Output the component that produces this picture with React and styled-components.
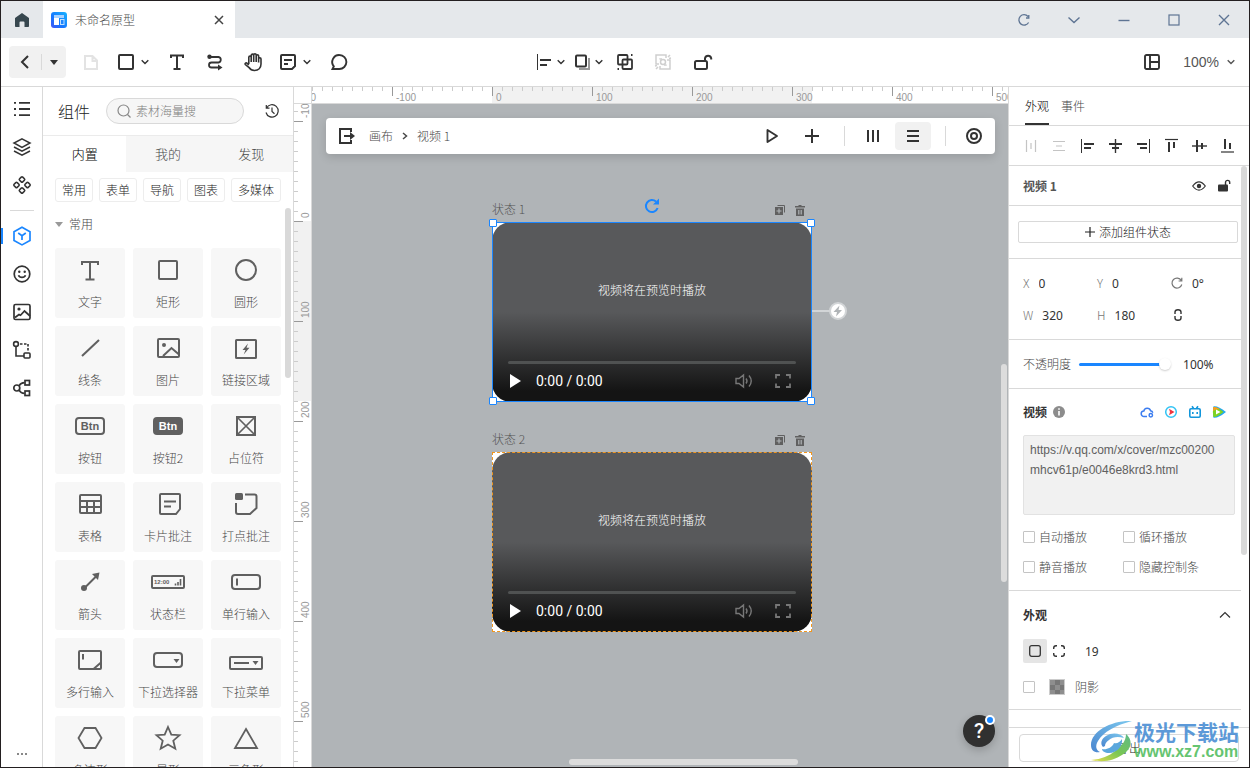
import React from 'react'
import styled, { createGlobalStyle, css } from 'styled-components'

const GlobalStyle = createGlobalStyle`
  *, *::before, *::after {
    box-sizing: border-box;
  }
  body {
    margin: 0;
    font-family: "Noto Sans CJK SC", "Noto Sans", sans-serif;
    font-size: 12px;
    font-weight: 300;
    line-height: 20px;
    color: #484848;
  }
  button, input, textarea {
    font: inherit;
    color: inherit;
    margin: 0;
  }
`

const ink = '#333'
const textDark = '#222'
const textGrey = '#484848'
const line = '#d9d9d9'
const blue = '#1a86ff'

/* ---------- shared ---------- */

const FlexRow = styled.div`
  display: flex;
  align-items: center;
`

const PlainButton = styled.button`
  display: flex;
  align-items: center;
  justify-content: center;
  padding: 0;
  border: 0;
  background: none;
  color: ${props => props.$color || ink};
  cursor: pointer;
`

const Svg = styled.svg`
  display: block;
  flex: none;
  overflow: visible;
  fill: none;
  stroke: currentColor;
  stroke-width: ${props => props.$stroke || 2};
`

const Icon = ({ size = 16, height, stroke, children }) => (
  <Svg width={size} height={height || size} viewBox={`0 0 ${size} ${height || size}`} $stroke={stroke} aria-hidden="true">
    {children}
  </Svg>
)

const Solid = props => <g fill="currentColor" stroke="none" {...props} />

const Chevron = () => (
  <Icon size={8} stroke={1.4}><path d="M.7 2.2 4 5.6l3.3-3.4" /></Icon>
)

/* ---------- frame ---------- */

const Window = styled.div`
  display: flex;
  flex-direction: column;
  height: 100vh;
  overflow: hidden;
  position: relative;
  border: 1px solid #231f20;
  background: white;
`

const TitleBar = styled(FlexRow)`
  flex: none;
  height: 37px;
  background: #e5e8eb;
`

const HomeButton = styled(PlainButton)`
  width: 42px;
  height: 100%;
`

const DocTab = styled(FlexRow)`
  width: 192px;
  height: 100%;
  padding: 0 9px 0 8px;
  gap: 8px;
  background: white;
  color: ${textGrey};
`

const DocName = styled.span`
  flex: 1;
`

const WindowControls = styled(FlexRow)`
  margin-left: auto;
`

const WindowButton = styled(PlainButton)`
  width: 50px;
  height: 37px;
`

const Toolbar = styled.header`
  display: grid;
  grid-template-columns: 1fr auto 1fr;
  align-items: center;
  flex: none;
  height: 49px;
  padding: 0 8px;
  border-bottom: 1px solid ${line};
`

const BackGroup = styled(FlexRow)`
  width: 57px;
  height: 32px;
  margin-right: 6px;
  border-radius: 4px;
  background: #f1f1f1;
`

const BackPart = styled(PlainButton)`
  width: ${props => props.$width};
  height: 16px;
  & + & {
    border-left: 1px solid #d9d9d9;
  }
`

const Tool = styled(PlainButton)`
  width: 38px;
  height: 32px;
  ${props => props.$menu && css`
    justify-content: flex-start;
    width: 48px;
    padding-left: 8px;
    gap: 7px;
  `}
  ${props => props.$tight && css`
    width: 38px;
    padding-left: 6px;
    gap: 5px;
  `}
`

const ToolbarEnd = styled(FlexRow)`
  justify-content: flex-end;
  gap: 12px;
  padding-right: 6px;
`

const ZoomButton = styled(PlainButton)`
  gap: 8px;
  font-family: "Liberation Sans", sans-serif;
  font-size: 14px;
`

const Body = styled.div`
  display: flex;
  flex: 1;
  min-height: 0;
`

/* ---------- left rail ---------- */

const Rail = styled.nav`
  display: flex;
  flex-direction: column;
  flex: none;
  width: 42px;
  padding: 3px 0 5px;
  border-right: 1px solid ${line};
`

const RailButton = styled(PlainButton)`
  position: relative;
  height: 38px;
  padding-left: 1px;
  color: ${props => (props.$active ? blue : ink)};
  ${props => props.$active && css`
    &::before {
      content: '';
      position: absolute;
      left: 0;
      width: 2px;
      height: 16px;
      background: ${blue};
    }
  `}
`

const RailDivider = styled.hr`
  width: 24px;
  margin: 6px auto;
  border: 0;
  border-top: 1px solid ${line};
`

const RailMore = styled(PlainButton)`
  height: 16px;
  margin-top: auto;
  color: #888;
`

/* ---------- component library ---------- */

const Library = styled.aside`
  display: flex;
  flex-direction: column;
  flex: none;
  position: relative;
  width: 251px;
  border-right: 1px solid ${line};
`

const LibraryHead = styled(FlexRow)`
  flex: none;
  height: 49px;
  padding: 0 14px 0 15px;
  border-bottom: 1px solid #ebebeb;
`

const LibraryTitle = styled.h1`
  margin: 0 16px 0 0;
  font-size: 16px;
  font-weight: inherit;
  color: ${textDark};
`

const SearchBox = styled.label`
  display: flex;
  align-items: center;
  gap: 5px;
  width: 138px;
  height: 26px;
  padding: 0 10px;
  border: 1px solid ${line};
  border-radius: 13px;
  background: #f6f6f6;
  color: #888;
`

const SearchInput = styled.input`
  min-width: 0;
  width: 100%;
  padding: 0;
  border: 0;
  outline: 0;
  background: none;
  &::placeholder {
    color: #808080;
    opacity: 1;
  }
`

const HistoryButton = styled(PlainButton)`
  margin-left: auto;
`

const LibraryTabs = styled.div`
  display: grid;
  grid-template-columns: repeat(3, 1fr);
  flex: none;
  height: 36px;
`

const LibraryTab = styled(PlainButton)`
  font-size: 13px;
  background: ${props => (props.$active ? 'white' : '#f6f6f6')};
  color: ${props => (props.$active ? '#000' : textGrey)};
`

const Chips = styled(FlexRow)`
  flex: none;
  gap: 6px;
  padding: 6px 12px;
`

const Chip = styled(PlainButton)`
  height: 24px;
  padding: 0 6px;
  border: 1px solid #ededed;
  border-radius: 3px;
  color: ${textDark};
`

const GroupToggle = styled(PlainButton)`
  justify-content: flex-start;
  flex: none;
  height: 32px;
  margin-bottom: 8px;
  padding-left: 12px;
  gap: 6px;
  color: ${textGrey};
`

const WidgetGrid = styled.div`
  display: grid;
  grid-template-columns: repeat(3, 70px);
  grid-auto-rows: 70px;
  gap: 8px;
  flex: 1;
  min-height: 0;
  overflow: hidden;
  padding: 0 12px;
`

const Widget = styled(PlainButton)`
  flex-direction: column;
  justify-content: flex-start;
  gap: 8px;
  padding-top: 8px;
  border-radius: 3px;
  background: #f7f7f7;
  color: ${textGrey};
  white-space: nowrap;
  svg {
    color: #606060;
  }
`

const LibraryScroll = styled.div`
  position: absolute;
  right: 2px;
  top: 121px;
  width: 6px;
  height: 170px;
  border-radius: 3px;
  background: #d9d9d9;
`

/* ---------- stage ---------- */

const Stage = styled.main`
  display: grid;
  grid-template-columns: 18px 1fr;
  grid-template-rows: 17px 1fr;
  flex: 1;
  min-width: 0;
`

const RulerCorner = styled.div`
  border-right: 1px solid ${line};
  border-bottom: 1px solid ${line};
`

const TopRuler = styled.div`
  overflow: hidden;
  border-bottom: 1px solid ${line};
  font-family: "Liberation Sans", sans-serif;
  font-size: 10px;
  font-weight: 400;
  line-height: 12px;
  color: #999;
`

const TopScale = styled.div`
  display: flex;
  width: 900px;
  height: 16px;
  margin-left: -20px;
  background: linear-gradient(to right, transparent 200px, #f1f1f1 200px 520px, transparent 520px);
`

const TopMark = styled.div`
  flex: none;
  width: 100px;
  padding: 5px 0 0 4px;
  background:
    linear-gradient(#999, #999) 0 0 / 1px 9px no-repeat,
    repeating-linear-gradient(to right, #ccc 0 1px, transparent 1px 10px) 0 0 / 100% 4px no-repeat;
`

const SideRuler = styled(TopRuler)`
  border-bottom: 0;
  border-right: 1px solid ${line};
`

const SideScale = styled.div`
  display: flex;
  flex-direction: column;
  width: 17px;
  height: 800px;
  margin-top: -82px;
  background: linear-gradient(transparent 199px, #f1f1f1 199px 379px, transparent 379px);
`

// rotated half a turn so the numbers read upwards: padding and ticks are mirrored
const SideMark = styled.div`
  flex: none;
  height: 100px;
  padding: 4px 6px 0 0;
  writing-mode: vertical-rl;
  transform: rotate(180deg);
  background:
    linear-gradient(#999, #999) 100% 0 / 9px 1px no-repeat,
    repeating-linear-gradient(#ccc 0 1px, transparent 1px 10px) 100% 0 / 4px 100% no-repeat;
`

const Canvas = styled.section`
  position: relative;
  overflow: hidden;
  padding: 14px 13px 14px 14px;
  background: #b0b4b7;
`

const CrumbBar = styled(FlexRow)`
  height: 36px;
  padding: 0 3px 0 13px;
  border-radius: 4px;
  background: white;
  box-shadow: 0 3px 10px rgba(0, 0, 0, 0.14);
`

const Crumbs = styled(FlexRow)`
  flex: 1;
  gap: 8px;
  margin-left: 14px;
  color: ${textGrey};
`

const CrumbLink = styled.a`
  color: inherit;
  text-decoration: none;
`

const BarButton = styled(PlainButton)`
  width: 36px;
  height: 28px;
  border-radius: 4px;
  background: ${props => (props.$active ? '#f1f1f1' : 'none')};
  & + & {
    margin-left: 4px;
  }
`

const BarDivider = styled.span`
  width: 1px;
  height: 20px;
  margin: 0 10px 0 14px;
  background: ${line};
`

// artboards sit on the free canvas at the ruler's origin
const Artboards = styled.div`
  position: absolute;
  left: 180px;
  top: 96px;
  display: flex;
  flex-direction: column;
  gap: 28px;
`

const StateHead = styled(FlexRow)`
  height: 22px;
  padding: 0 6px 4px 0;
  gap: 8px;
  color: #555;
`

const StateName = styled.span`
  flex: 1;
`

const StateButton = styled(PlainButton)`
  width: 12px;
  height: 14px;
  padding-top: 2px;
  color: #606060;
`

const Frame = styled.div`
  position: relative;
  width: 320px;
  height: 180px;
  background: white;
`

const Player = styled.div`
  display: flex;
  flex-direction: column;
  height: 100%;
  padding: 0 16px 9px;
  border-radius: 19px;
  background: linear-gradient(#58595b 50%, #141414 94%);
`

const PlayerHint = styled.p`
  margin: 58px 0 0;
  text-align: center;
  color: white;
`

const Progress = styled.div`
  height: 3px;
  margin-top: auto;
  border-radius: 2px;
  background: #505252;
`

const Controls = styled(FlexRow)`
  height: 24px;
  margin-top: 5px;
  padding: 0 5px 0 2px;
`

const Time = styled.span`
  flex: 1;
  margin-left: 15px;
  font-family: Roboto, sans-serif;
  font-size: 14px;
  font-weight: 400;
  color: white;
`

const ControlButton = styled(PlainButton)`
  margin-left: 22px;
  color: #777;
`

const Outline = styled.div`
  position: absolute;
  inset: 0;
  border: 1px ${props => (props.$selected ? `solid ${blue}` : 'dashed #f0961e')};
`

const Handle = styled.span`
  position: absolute;
  width: 8px;
  height: 8px;
  border: 1px solid ${blue};
  border-radius: 1px;
  background: white;
  ${props => props.$y}: -3px;
  ${props => props.$x}: -3px;
`

const Rotate = styled(PlainButton)`
  position: absolute;
  left: 152px;
  top: -24px;
  color: ${blue};
`

const EventLink = styled(PlainButton)`
  position: absolute;
  left: 100%;
  top: 80px;
`

const CanvasScrollY = styled.div`
  position: absolute;
  right: 1px;
  top: 260px;
  width: 6px;
  height: 218px;
  border-radius: 3px;
  background: #dcdcdc;
`

const CanvasScrollX = styled.div`
  position: absolute;
  left: 257px;
  bottom: 2px;
  width: 229px;
  height: 6px;
  border-radius: 3px;
  background: #dcdcdc;
`

const HelpButton = styled(PlainButton)`
  position: absolute;
  right: 13px;
  bottom: 20px;
  width: 32px;
  height: 32px;
  border-radius: 50%;
  background: #303030;
  color: white;
  font-family: Roboto, sans-serif;
  font-size: 21px;
  font-weight: 500;
  box-shadow: 0 3px 8px rgba(0, 0, 0, 0.2);
  &::after {
    content: '';
    position: absolute;
    right: 0;
    top: 0;
    width: 10px;
    height: 10px;
    border: 2px solid white;
    border-radius: 50%;
    background: ${blue};
  }
`

/* ---------- inspector ---------- */

const Inspector = styled.aside`
  display: flex;
  flex-direction: column;
  flex: none;
  width: 241px;
  border-left: 1px solid ${line};
`

const InspectorTabs = styled.div`
  display: flex;
  flex: none;
  height: 39px;
  padding: 0 16px;
  gap: 12px;
  border-bottom: 1px solid ${line};
`

const InspectorTab = styled(PlainButton)`
  border-top: 2px solid transparent;
  border-bottom: 2px solid ${props => (props.$active ? ink : 'transparent')};
  color: ${props => (props.$active ? '#000' : textGrey)};
`

const AlignRow = styled(FlexRow)`
  flex: none;
  height: 40px;
  padding: 0 8px;
  border-bottom: 1px solid ${line};
`

const AlignButton = styled(PlainButton)`
  width: 28px;
  height: 28px;
`

const InspectorBody = styled.div`
  position: relative;
  flex: 1;
  min-height: 0;
  overflow: hidden;
  padding-right: 8px;
`

const InspectorScroll = styled.div`
  position: absolute;
  right: 2px;
  top: 0;
  width: 6px;
  height: 389px;
  border-radius: 3px;
  background: #d9d9d9;
`

const Section = styled.section`
  padding: ${props => props.$padding || '0 10px 0 14px'};
  border-bottom: 1px solid ${line};
`

const SectionHead = styled(FlexRow)`
  height: ${props => props.$height || '39px'};
  padding-right: ${props => props.$inset || 0};
  gap: 12px;
`

const Heading = styled.h2`
  flex: ${props => (props.$tight ? 'none' : 1)};
  margin: 0;
  font-size: 12px;
  font-weight: 700;
  color: ${props => props.$color || ink};
`

const InfoMark = styled(PlainButton)`
  margin: 0 auto 0 -6px;
  color: #8c8c8c;
`

const OutlineButton = styled(PlainButton)`
  width: 100%;
  height: ${props => props.$height};
  gap: 4px;
  border: 1px solid ${line};
  border-radius: ${props => props.$radius || '2px'};
  background: white;
  color: ${textDark};
`

const Geometry = styled.div`
  display: grid;
  grid-template-columns: 74px 74px 1fr;
  grid-auto-rows: 32px;
  align-items: center;
`

const Field = styled.label`
  display: flex;
  align-items: center;
  gap: 9px;
  color: #777;
`

const NumberInput = styled.input`
  width: ${props => props.$width || '32px'};
  padding: 2px 0 0;
  border: 0;
  outline: 0;
  background: none;
  color: ${ink};
  font-family: "Noto Sans", sans-serif;
  font-weight: 400;
`

const RatioButton = styled(PlainButton)`
  justify-content: flex-start;
  padding-left: 3px;
`

const OpacityRow = styled(FlexRow)`
  height: 48px;
`

const Range = styled.input`
  width: 92px;
  height: 16px;
  margin: 0 12px 0 8px;
  appearance: none;
  background: none;
  &::-webkit-slider-runnable-track {
    height: 3px;
    border-radius: 2px;
    background: linear-gradient(to right, ${blue} 82px, transparent 82px);
  }
  &::-webkit-slider-thumb {
    appearance: none;
    width: 12px;
    height: 12px;
    margin-top: -5px;
    border-radius: 50%;
    background: white;
    box-shadow: 0 1px 2px rgba(0, 0, 0, 0.2);
  }
`

const UrlBox = styled.textarea`
  display: block;
  width: 100%;
  height: 80px;
  padding: 4px 14px 4px 6px;
  resize: none;
  border: 1px solid #e2e2e2;
  border-radius: 2px;
  outline: 0;
  background: #f1f1f1;
  color: #606060;
  font-family: "Liberation Sans", sans-serif;
  font-weight: 400;
  word-break: break-all;
`

const Options = styled.div`
  display: grid;
  grid-template-columns: 100px 1fr;
  grid-auto-rows: 30px;
  margin-top: 7px;
`

const Option = styled.label`
  display: flex;
  align-items: center;
  gap: 4px;
`

const Check = styled.input`
  appearance: none;
  flex: none;
  width: 12px;
  height: 12px;
  border: 1px solid #c4c4c4;
  border-radius: 1px;
  background: white;
`

const CornerRow = styled(FlexRow)`
  height: 36px;
`

const CornerButton = styled(PlainButton)`
  width: 24px;
  height: 24px;
  border-radius: 2px;
  background: ${props => (props.$active ? '#e5e5e5' : 'none')};
`

const CornerInput = styled(NumberInput)`
  margin-left: 14px;
`

const Swatch = styled.span`
  width: 16px;
  height: 16px;
  margin: 0 6px 0 10px;
  border: 1px solid #ccc;
  background: repeating-conic-gradient(#777 0 25%, #8e8e8e 0 50%) 0 0 / 10px 10px;
`

const ExportBar = styled.footer`
  flex: none;
  height: 40px;
  padding: 6px 10px;
  border-top: 1px solid ${line};
`

/* ---------- watermark ---------- */

const Watermark = styled.div`
  position: absolute;
  right: 10px;
  bottom: 5px;
  display: flex;
  align-items: center;
  gap: 2px;
  pointer-events: none;
`

const WatermarkText = styled.div`
  display: flex;
  flex-direction: column;
  font-size: 21px;
  line-height: 22px;
  font-weight: 700;
  color: #4b8fd4;
  opacity: 0.9;
`

const WatermarkUrl = styled.span`
  font-family: "Liberation Sans", sans-serif;
  font-size: 16px;
  line-height: 20px;
  color: #55be62;
`

const GlyphText = styled.text`
  fill: ${props => (props.$light ? 'white' : 'currentColor')};
  stroke: none;
  font-family: "Liberation Sans", sans-serif;
  font-weight: 700;
  font-size: ${props => props.$size || '11px'};
`

/* ---------- data ---------- */

const railTop = [
  ['页面', <Icon size={16} stroke={1.8}><path d="M5 1.8h11M5 8h11M5 14.2h11M0 1.8h2M0 8h2M0 14.2h2" /></Icon>],
  ['图层', <Icon size={18} stroke={1.5}><path d="M9 .8 17 5 9 9.300 1 5ZM1 9l8 4.200L17 9M1 13l8 4.200L17 13" /></Icon>],
  ['母版', <Icon size={18} stroke={1.6}>
    <rect x="6.800" y="1.300" width="4.400" height="4.400" rx="1" transform="rotate(45 9 3.500)" />
    <rect x="6.800" y="12.300" width="4.400" height="4.400" rx="1" transform="rotate(45 9 14.500)" />
    <rect x="1.300" y="6.800" width="4.400" height="4.400" rx="1" transform="rotate(45 3.500 9)" />
    <rect x="12.300" y="6.800" width="4.400" height="4.400" rx="1" transform="rotate(45 14.500 9)" />
  </Icon>]
]

const railBottom = [
  ['组件', <Icon size={18} stroke={1.7}><path d="m9 .300 8 4.400v8.800L9 17.900l-8-4.400V4.700ZM5.200 6 9 8.600 12.800 6M9 8.600V13" /></Icon>, true],
  ['图标', <Icon size={18} stroke={1.700}><circle cx="9" cy="9" r="7.800" /><path d="M5.500 10.200c1.200 3 5.800 3 7 0" /><Solid><circle cx="6.300" cy="6.800" r="1.200" /><circle cx="11.700" cy="6.800" r="1.200" /></Solid></Icon>],
  ['图片', <Icon size={18} stroke={1.700}><rect x="1" y="1.500" width="16" height="15" rx="1.500" /><path d="m2 14.500 4-3 1.500.8L11.500 8l5.500 5" /><Solid><circle cx="6" cy="6" r="1.600" /></Solid></Icon>],
  ['流程', <Icon size={18} stroke={1.600}><circle cx="3" cy="3" r="2.400" /><path d="M3 5.500V15h8" /><path d="M7 3h8v7" strokeDasharray="2.500 1.500" /><rect x="11" y="12" width="6" height="5" rx="1" /></Icon>],
  ['脑图', <Icon size={18} stroke={1.700}><circle cx="3.800" cy="9" r="3" /><path d="M6 6.800C7.300 4.500 9 3.600 11.500 3.600M6 11.200c1.300 2.300 3 3.200 5.500 3.200" /><rect x="12" y="1.500" width="4.500" height="4.500" /><rect x="12" y="12" width="4.500" height="4.500" /></Icon>]
]

const widgets = [
  ['文字', <path d="M10 9V6h16v3M18 6v17M13.500 23.500h9" />],
  ['矩形', <rect x="9" y="5" width="18" height="18" rx="1" />],
  ['圆形', <circle cx="18" cy="14" r="10" />],
  ['线条', <path d="M10 22 27 6" />],
  ['图片', <><rect x="8" y="5" width="21" height="18" rx="1" /><path d="m13 22 8.500-8 7.500 6.500" /><Solid><circle cx="14" cy="11" r="2" /></Solid></>],
  ['链接区域', <><rect x="8" y="6" width="20" height="18" rx=".5" /><Solid><path d="m20 9.500-5.500 6.500h3l-1.800 4.500 5.800-6.800h-3Z" /></Solid></>],
  ['按钮', <><rect x="4" y="6" width="28" height="16" rx="3" /><GlyphText x="18" y="18" textAnchor="middle">Btn</GlyphText></>],
  ['按钮2', <><rect x="4" y="6" width="28" height="16" rx="3" fill="currentColor" /><GlyphText x="18" y="18" textAnchor="middle" $light>Btn</GlyphText></>],
  ['占位符', <><rect x="9" y="5" width="18" height="18" /><path d="m9 5 18 18M27 5 9 23" strokeWidth="1.700" /></>],
  ['表格', <><rect x="8" y="5" width="21" height="18" rx="1" /><path d="M8 11h21M8 17h21M15 11v12M22 11v12" /></>],
  ['卡片批注', <><path d="M11 4h18q1 0 1 1v14l-4 5H11q-1 0-1-1V5q0-1 1-1Z" /><path d="M14 11.500h12M14 16.500h7" /></>],
  ['打点批注', <><path d="M17 4.500h9.500q2 0 2 2V18L22 24H10q-2 0-2-2v-9" /><Solid><rect x="7" y="3" width="8" height="7" rx="1.500" /></Solid></>],
  ['箭头', <><path d="m12 20.500 12-12" /><Solid><circle cx="12" cy="20" r="3" /><path d="M27.500 4.500 26 12l-6-6Z" /></Solid></>],
  ['状态栏', <><rect x="2" y="8" width="32" height="12" rx="1" /><GlyphText x="4" y="16" $size="6px">12:00</GlyphText><path d="M25.500 17.500v-2M28 17.500v-3.500M30.500 17.500V11" strokeWidth="1.600" /></>],
  ['单行输入', <><rect x="4" y="7" width="28" height="14" rx="3" /><path d="M9 10.500v7" /></>],
  ['多行输入', <><rect x="7" y="5" width="22" height="18" rx="1" /><path d="M11 8v5.500M21.500 23l7.500-6.500" /></>],
  ['下拉选择器', <><rect x="4" y="7" width="28" height="14" rx="3" /><Solid><path d="M23.500 13h6L26.500 17Z" /></Solid></>],
  ['下拉菜单', <><rect x="2" y="11" width="32" height="12" rx="1" /><path d="M6 17h15" /><Solid><path d="M24.500 15h6L27.500 19Z" /></Solid></>],
  ['多边形', <path d="M12.500 4h11L29.500 14l-6 10h-11L6.500 14Z" strokeWidth="1.800" />],
  ['星形', <path d="m18 3 3.300 7.600 8.200.6-6.200 5.500 2 8L18 20.500l-7.300 4.200 2-8-6.200-5.500 8.200-.6Z" strokeWidth="1.800" />],
  ['三角形', <path d="M18 5 29 24H7Z" strokeWidth="1.800" />]
]

const aligns = [
  ['水平分布', <path d="M2.500 1v12M11.500 1v12M7 4v6" />, true],
  ['垂直分布', <path d="M1 2.500h12M1 11.500h12M4 7h6" />, true],
  ['左对齐', <><path d="M1.500 0v14" strokeWidth="1" /><path d="M4 5h10M4 9h7" strokeWidth="2" /></>],
  ['水平居中', <><path d="M7.500 0v14" strokeWidth="1.400" /><path d="M1 5h13M4 9h7" strokeWidth="2" /></>],
  ['右对齐', <><path d="M13.500 0v14" strokeWidth="1" /><path d="M1 5h10M4 9h7" strokeWidth="2" /></>],
  ['顶对齐', <><path d="M1 .500h13" strokeWidth="1.200" /><path d="M5 3v10M10 3v6" strokeWidth="2" /></>],
  ['垂直居中', <><path d="M0 7h15" strokeWidth="1.400" /><path d="M5 1v12M10 4v6" strokeWidth="2" /></>],
  ['底对齐', <><path d="M1 13h13" strokeWidth="1.200" /><path d="M5 0v10M10 4v6" strokeWidth="2" /></>]
]

const topMarks = [-200, -100, 0, 100, 200, 300, 400, 500]
const sideMarks = [-100, 0, 100, 200, 300, 400, 500, 600]

/* ---------- parts ---------- */

const TitleArea = () => (
  <TitleBar>
    <HomeButton aria-label="主页" $color="#37474f">
      <Icon size={14}><Solid><path d="M7 0 0 5v8.200q0 .8.800.8h3.700V9.500q0-1 1-1h3q1 0 1 1V14h3.700q.8 0 .8-.8V5Z" /></Solid></Icon>
    </HomeButton>
    <DocTab>
      <Icon size={16}>
        <defs>
          <linearGradient id="doc" x1="0" y1="1" x2="1" y2="0">
            <stop offset="0" stopColor="#4455f5" />
            <stop offset=".4" stopColor="#1677ff" />
            <stop offset="1" stopColor="#18b4ff" />
          </linearGradient>
        </defs>
        <rect width="16" height="16" rx="3" fill="url(#doc)" stroke="none" />
        <rect x="3" y="3" width="10" height="3" fill="#a9d2ff" stroke="none" />
        <rect x="3" y="6" width="5" height="7" fill="#fff" stroke="none" />
        <rect x="9.500" y="7.500" width="3.500" height="5" fill="#1f86ff" stroke="#bfe0ff" strokeWidth="1" />
      </Icon>
      <DocName>未命名原型</DocName>
      <PlainButton aria-label="关闭标签" $color="#444">
        <Icon size={14} stroke={1.500}><path d="m3 3 8 8M11 3l-8 8" /></Icon>
      </PlainButton>
    </DocTab>
    <WindowControls>
      <WindowButton aria-label="刷新" $color="#5e7493"><Icon size={12} stroke={1.300}><path d="M10 2.500A5.200 5.200 0 1 0 10.600 8.500M10.800 1v3H8" /></Icon></WindowButton>
      <WindowButton aria-label="更多" $color="#5e7493"><Icon size={12} stroke={1.400}><path d="m.500 3.500 5.500 5 5.500-5" /></Icon></WindowButton>
      <WindowButton aria-label="最小化" $color="#5e7493"><Icon size={12} stroke={1.400}><path d="M.500 6.500h11" /></Icon></WindowButton>
      <WindowButton aria-label="最大化" $color="#5e7493"><Icon size={12} stroke={1.200}><rect x="1" y="1" width="10" height="10" /></Icon></WindowButton>
      <WindowButton aria-label="关闭" $color="#5e7493"><Icon size={12} stroke={1.400}><path d="m1 1 10 10M11 1 1 11" /></Icon></WindowButton>
    </WindowControls>
  </TitleBar>
)

const MainToolbar = () => (
  <Toolbar>
    <FlexRow>
      <BackGroup>
        <BackPart $width="32px" aria-label="返回"><Icon size={14}><path d="M10 1 4 7l6 6" /></Icon></BackPart>
        <BackPart $width="25px" aria-label="返回菜单"><Icon size={8}><Solid><path d="M0 2h8L4 7Z" /></Solid></Icon></BackPart>
      </BackGroup>
      <Tool aria-label="页面" disabled $color="#e3e3e3"><Icon size={14}><path d="M1 1h7.500L13 5.500V14H1ZM8.500 1v5H13" /></Icon></Tool>
      <Tool aria-label="矩形" $menu><Icon><rect x="1" y="1" width="14" height="14" rx="1" /></Icon><Chevron /></Tool>
      <Tool aria-label="文字"><Icon><path d="M2 4V1.500h12V4M8 1.500V14.500M4.500 15h7" /></Icon></Tool>
      <Tool aria-label="连线">
        <Icon>
          <path d="M3 3h8.500a2.800 2.800 0 0 1 0 5.500H4.500a2.500 2.500 0 0 0 0 5H12" strokeWidth="1.800" />
          <Solid><circle cx="2.500" cy="2.800" r="2.200" /><path d="m11 10.500 4.500 3-4.500 3Z" /></Solid>
        </Icon>
      </Tool>
      <Tool aria-label="抓手">
        <Icon size={18} stroke={1.600}>
          <path d="M4.800 11V4.300a1.200 1.200 0 0 1 2.400 0V2.400a1.200 1.200 0 0 1 2.500 0v-.4a1.200 1.200 0 0 1 2.500 0v1a1.200 1.200 0 0 1 2.400 0V6a1.200 1.200 0 0 1 2.400 0V11c0 4-2.600 6.500-6.500 6.500-2.800 0-4.300-1-5.700-3.200L1.300 11.500c-.6-1 .4-2 1.400-1.500l2.100 2M7.200 4v5M9.700 2v7M12.200 3v6M14.600 6v3.500" />
        </Icon>
      </Tool>
      <Tool aria-label="批注" $menu><Icon><path d="M2 1h12q1 0 1 1v10l-3 3H2q-1 0-1-1V2q0-1 1-1ZM4 6h8M4 10h4" /></Icon><Chevron /></Tool>
      <Tool aria-label="评论"><Icon stroke={1.900}><path d="M8.500 1a7 7 0 1 1-.200 14H1.500l1.300-2.600A7 7 0 0 1 8.500 1Z" /></Icon></Tool>
    </FlexRow>
    <FlexRow>
      <Tool aria-label="对齐" $menu $tight><Icon><path d="M1.500 0v16" strokeWidth="1" /><path d="M4 6h11M4 11h7" /></Icon><Chevron /></Tool>
      <Tool aria-label="层级" $menu $tight><Icon><path d="M15 4v11H5" stroke="#999" /><rect x="2" y="1.500" width="10" height="11" rx="1" /></Icon><Chevron /></Tool>
      <Tool aria-label="组合"><Icon stroke={1.800}><rect x="1" y="1" width="9.500" height="9.500" rx="1" /><rect x="5.500" y="5.500" width="9.500" height="9.500" rx="1" /><path d="M14 1h1.500M.500 15H2" /></Icon></Tool>
      <Tool aria-label="取消组合" disabled $color="#cfcfcf"><Icon stroke={1.500}><path d="M11 4V1H1v9h3M5 12v3h10V6h-3" /><circle cx="8" cy="8" r="2.500" /><path d="M5 5.500V5h2M11 10.500v.5H9M13 3l2-2M14 4.500l2-.500M1 15l2-2M0 12l2-.500" /></Icon></Tool>
      <Tool aria-label="解锁"><Icon size={18}><rect x="3" y="8" width="12" height="8" rx="1.500" /><path d="M13 8V5.200a3.200 3.200 0 0 1 6.200 0V6.500" /></Icon></Tool>
    </FlexRow>
    <ToolbarEnd>
      <Tool aria-label="面板"><Icon stroke={1.900}><rect x="1" y="1" width="14" height="14" rx="1.500" /><path d="M6 1v14M6 8h9" /></Icon></Tool>
      <ZoomButton $color="#555"><span>100%</span><Chevron /></ZoomButton>
    </ToolbarEnd>
  </Toolbar>
)

const LeftRail = () => (
  <Rail>
    {railTop.map(([name, icon]) => <RailButton key={name} aria-label={name}>{icon}</RailButton>)}
    <RailDivider />
    {railBottom.map(([name, icon, active]) => (
      <RailButton key={name} aria-label={name} $active={active}>{icon}</RailButton>
    ))}
    <RailMore aria-label="更多"><Icon size={10} height={2}><path d="M0 1h2M4 1h2M8 1h2" /></Icon></RailMore>
  </Rail>
)

const ComponentLibrary = () => (
  <Library>
    <LibraryHead>
      <LibraryTitle>组件</LibraryTitle>
      <SearchBox>
        <Icon size={14} stroke={1.200}><circle cx="6.500" cy="6.500" r="5.500" /><path d="m10.500 10.500 3 3" /></Icon>
        <SearchInput type="text" placeholder="素材海量搜" aria-label="素材海量搜" />
      </SearchBox>
      <HistoryButton aria-label="历史">
        <Icon size={14} stroke={1.200}><path d="M1.500 4A6.200 6.200 0 1 1 1 8.500M1.300 1v3.200h3.200M7 3.500v4l2.500 2.200" /></Icon>
      </HistoryButton>
    </LibraryHead>
    <LibraryTabs>
      <LibraryTab $active>内置</LibraryTab>
      <LibraryTab>我的</LibraryTab>
      <LibraryTab>发现</LibraryTab>
    </LibraryTabs>
    <Chips>
      {['常用', '表单', '导航', '图表', '多媒体'].map(name => <Chip key={name}>{name}</Chip>)}
    </Chips>
    <GroupToggle>
      <Icon size={8}><Solid fill="#999"><path d="M0 2h8L4 7Z" /></Solid></Icon>
      常用
    </GroupToggle>
    <WidgetGrid>
      {widgets.map(([name, drawing]) => (
        <Widget key={name}>
          <Icon size={36} height={28}>{drawing}</Icon>
          {name}
        </Widget>
      ))}
    </WidgetGrid>
    <LibraryScroll />
  </Library>
)

const VideoState = ({ name, selected }) => (
  <div>
    <StateHead>
      <StateName>{name}</StateName>
      <StateButton aria-label="复制状态">
        <Icon size={10}><path d="M2.500.500h7v7" strokeWidth="1" /><Solid><path fillRule="evenodd" d="M0 2h8v8H0ZM3.400 3.500v1.900H1.500v1.200h1.900v1.900h1.200V6.600h1.900V5.400H4.600V3.500Z" /></Solid></Icon>
      </StateButton>
      <StateButton aria-label="删除状态">
        <Icon size={10}><Solid><path fillRule="evenodd" d="M0 1h3.500V0h3v1H10v1.500H0ZM1 3.500h8V11H1ZM3.200 5v4.500h1.200V5ZM5.600 5v4.500h1.200V5Z" /></Solid></Icon>
      </StateButton>
    </StateHead>
    <Frame>
      <Player>
        <PlayerHint>视频将在预览时播放</PlayerHint>
        <Progress />
        <Controls>
          <PlainButton aria-label="播放" $color="white"><Icon size={11} height={14}><Solid><path d="M0 0v14l11-7Z" /></Solid></Icon></PlainButton>
          <Time>0:00 / 0:00</Time>
          <ControlButton aria-label="音量">
            <Icon size={18} height={14} stroke={1.400}><path d="M1 4.500h3L8.500 1v12L4 9.500H1ZM11 4.500q2 2.500 0 5M14 1.500q4.500 5.500 0 11" /></Icon>
          </ControlButton>
          <ControlButton aria-label="全屏">
            <Icon size={16} height={14} stroke={1.800}><path d="M1 4.500V1h4M11 1h4v3.500M15 9.500V13h-4M5 13H1V9.500" /></Icon>
          </ControlButton>
        </Controls>
      </Player>
      <Outline $selected={selected} />
      {selected && (
        <>
          <Handle $x="left" $y="top" />
          <Handle $x="right" $y="top" />
          <Handle $x="left" $y="bottom" />
          <Handle $x="right" $y="bottom" />
          <Rotate aria-label="旋转"><Icon><path d="M13.600 10A6 6 0 1 1 12 3.600" /><Solid><path d="M15 .500v6H9Z" /></Solid></Icon></Rotate>
          <EventLink aria-label="事件">
            <Icon size={35} height={18}>
              <path d="M0 9h18" stroke="#d2d5d7" />
              <circle cx="26" cy="9" r="8" fill="#fff" stroke="#d2d5d7" />
              <path d="M27.500 3.500 21.500 10h3.500l-1 4.500 6-6.500h-3.500Z" fill="#b0b4b7" stroke="none" />
            </Icon>
          </EventLink>
        </>
      )}
    </Frame>
  </div>
)

const DesignStage = () => (
  <Stage>
    <RulerCorner />
    <TopRuler><TopScale>{topMarks.map(n => <TopMark key={n}>{n}</TopMark>)}</TopScale></TopRuler>
    <SideRuler><SideScale>{sideMarks.map(n => <SideMark key={n}>{n}</SideMark>)}</SideScale></SideRuler>
    <Canvas>
      <CrumbBar>
        <PlainButton aria-label="退出">
          <Icon><path d="M12 4V1H1v14h11v-3M5 8h7" /><Solid><path d="m11 4 5 4-5 4Z" /></Solid></Icon>
        </PlainButton>
        <Crumbs>
          <CrumbLink href="#canvas">画布</CrumbLink>
          <Icon size={8} stroke={1.500}><path d="m2 1 3.500 3L2 7" /></Icon>
          <span>视频 1</span>
        </Crumbs>
        <BarButton aria-label="播放"><Icon size={12} height={14} stroke={1.900}><path d="M1.500 1v12L11 7Z" strokeLinejoin="round" /></Icon></BarButton>
        <BarButton aria-label="添加"><Icon size={14}><path d="M7 0v14M0 7h14" /></Icon></BarButton>
        <BarDivider />
        <BarButton aria-label="横向排列"><Icon size={12}><path d="M1 0v12M6 0v12M11 0v12" /></Icon></BarButton>
        <BarButton aria-label="纵向排列" $active><Icon size={12}><path d="M0 1h12M0 6h12M0 11h12" /></Icon></BarButton>
        <BarDivider />
        <BarButton aria-label="定位"><Icon><circle cx="8" cy="8" r="7" /><circle cx="8" cy="8" r="3" /></Icon></BarButton>
      </CrumbBar>
      <Artboards>
        <VideoState name="状态 1" selected />
        <VideoState name="状态 2" />
      </Artboards>
      <CanvasScrollY />
      <CanvasScrollX />
      <HelpButton aria-label="帮助">?</HelpButton>
    </Canvas>
  </Stage>
)

const VideoSources = () => (
  <>
    <PlainButton aria-label="云盘" $color="#3c7df0">
      <Icon size={12} stroke={1.500}><path d="M6 10.500H3a2.700 2.700 0 0 1-.200-5.400 3.500 3.500 0 0 1 6.800-.300c1 .2 1.900.9 2.200 1.900" /><circle cx="9.800" cy="9.300" r="1.700" /></Icon>
    </PlainButton>
    <PlainButton aria-label="好看视频">
      <Icon size={12}><circle cx="6" cy="6" r="5.300" stroke="#31c3f4" strokeWidth="1.500" /><path d="m4 2.800 5.500 3.200L4 9.200 5 6Z" fill="#f0353f" stroke="none" /></Icon>
    </PlainButton>
    <PlainButton aria-label="哔哩哔哩" $color="#1296db">
      <Icon size={12} stroke={1.600}><rect x=".800" y="2.800" width="10.400" height="8.400" rx="1.200" /><path d="m3 .300 1.500 2M9 .300l-1.500 2M3.800 6v2M8.200 6v2" /></Icon>
    </PlainButton>
    <PlainButton aria-label="腾讯视频">
      <Icon size={12}>
        <Solid>
          <path d="M.500.300Q5-.500 13 6 5 12.500.500 11.700-.600 6 .500.300Z" fill="#22a7f0" />
          <path d="M.300 1Q4 .500 10.500 6 4 11.500.300 11-.500 6 .300 1Z" fill="#7ed321" />
          <path d="M.300 1Q3 .600 7 3L3 3.500.2 5Z" fill="#ff9a1f" />
          <path d="M3 3.500 7.500 6 3 8.500Z" fill="#fff" />
        </Solid>
      </Icon>
    </PlainButton>
  </>
)

const PropertyPanel = () => (
  <Inspector>
    <InspectorTabs>
      <InspectorTab $active>外观</InspectorTab>
      <InspectorTab>事件</InspectorTab>
    </InspectorTabs>
    <AlignRow>
      {aligns.map(([name, drawing, disabled]) => (
        <AlignButton key={name} aria-label={name} disabled={disabled} $color={disabled && '#c4c4c4'}>
          <Icon size={14} stroke={1.200}>{drawing}</Icon>
        </AlignButton>
      ))}
    </AlignRow>
    <InspectorBody>
      <Section>
        <SectionHead>
          <Heading $color="#555">视频 1</Heading>
          <PlainButton aria-label="可见"><Icon size={14} stroke={1.200}><path d="M.700 7Q7-1.300 13.300 7 7 15.300.700 7Z" /><Solid><circle cx="7" cy="7" r="2.200" /></Solid></Icon></PlainButton>
          <PlainButton aria-label="锁定"><Icon size={13}><Solid><rect x="0" y="5.500" width="10" height="7" rx="1" /></Solid><path d="M7.500 6V3.500a2 2 0 0 1 4.200 0V5" strokeWidth="1.400" /></Icon></PlainButton>
        </SectionHead>
      </Section>
      <Section $padding="15px 3px 15px 9px">
        <OutlineButton $height="22px">
          <Icon size={10} stroke={1.200}><path d="M5 0v10M0 5h10" /></Icon>
          添加组件状态
        </OutlineButton>
      </Section>
      <Section $padding="8px 14px">
        <Geometry>
          <Field>X<NumberInput defaultValue="0" /></Field>
          <Field>Y<NumberInput defaultValue="0" /></Field>
          <Field>
            <Icon size={12} stroke={1.200}><path d="M10.800 7.500A5 5 0 1 1 10.300 3.500M10.800.800v3.200H7.600" /></Icon>
            <NumberInput defaultValue="0°" aria-label="旋转" />
          </Field>
          <Field>W<NumberInput defaultValue="320" /></Field>
          <Field>H<NumberInput defaultValue="180" /></Field>
          <RatioButton aria-label="锁定比例">
            <Icon size={8} height={12} stroke={1.400}><path d="M1 5V3q0-2.300 3-2.300T7 3v2M1 7v2q0 2.300 3 2.300T7 9V7" /></Icon>
          </RatioButton>
        </Geometry>
      </Section>
      <Section>
        <OpacityRow>
          <label htmlFor="opacity">不透明度</label>
          <Range id="opacity" type="range" defaultValue="100" />
          <NumberInput defaultValue="100%" $width="40px" aria-label="不透明度数值" />
        </OpacityRow>
      </Section>
      <Section $padding="0 6px 8px 14px">
        <SectionHead $height="46px" $inset="10px">
          <Heading $tight>视频</Heading>
          <InfoMark aria-label="说明">
            <Icon size={12}><Solid><circle cx="6" cy="6" r="6" /></Solid><path d="M6 5v4.500M6 2.300v1.500" stroke="#fff" strokeWidth="1.600" /></Icon>
          </InfoMark>
          <VideoSources />
        </SectionHead>
        <UrlBox aria-label="视频地址" spellCheck="false" defaultValue="https://v.qq.com/x/cover/mzc00200mhcv61p/e0046e8krd3.html" />
        <Options>
          {['自动播放', '循环播放', '静音播放', '隐藏控制条'].map(name => (
            <Option key={name}><Check type="checkbox" />{name}</Option>
          ))}
        </Options>
      </Section>
      <Section $padding="6px 10px 4px 14px">
        <SectionHead $height="36px">
          <Heading>外观</Heading>
          <PlainButton aria-label="收起"><Icon size={12} stroke={1.200}><path d="m1 8.500 5-5 5 5" /></Icon></PlainButton>
        </SectionHead>
        <CornerRow>
          <CornerButton $active aria-label="统一圆角"><Icon size={12} stroke={1.300}><rect x=".700" y=".700" width="10.600" height="10.600" rx="2" /></Icon></CornerButton>
          <CornerButton aria-label="独立圆角"><Icon size={12} stroke={1.400}><path d="M.700 4V3Q.700.700 3 .700h1M8 .700h1q2.300 0 2.300 2.300v1M11.300 8v1q0 2.300-2.300 2.300H8M4 11.300H3Q.700 11.300.700 9V8" /></Icon></CornerButton>
          <CornerInput defaultValue="19" aria-label="圆角" />
        </CornerRow>
        <CornerRow>
          <Option><Check type="checkbox" /><Swatch />阴影</Option>
        </CornerRow>
      </Section>
      <InspectorScroll />
    </InspectorBody>
    <ExportBar>
      <OutlineButton $height="28px" $radius="4px">导出</OutlineButton>
    </ExportBar>
  </Inspector>
)

const SiteMark = () => (
  <Watermark>
    <Icon size={42} height={42}>
      <defs>
        <linearGradient id="swirlBlue" x1="0" y1="1" x2="1" y2="0">
          <stop offset="0" stopColor="#4a86cf" />
          <stop offset="1" stopColor="#7cc8ee" />
        </linearGradient>
        <linearGradient id="swirlGreen" x1="0" y1="1" x2="1" y2="0">
          <stop offset="0" stopColor="#e6dc4a" />
          <stop offset=".5" stopColor="#79c653" />
          <stop offset="1" stopColor="#5cb98a" />
        </linearGradient>
      </defs>
      <g stroke="none">
        <path d="M42 1C22 0 1 11 1 25c0 6 4 8 9 7-4-2-5-6-2-11C13 12 26 5 42 1Z" fill="url(#swirlBlue)" />
        <path d="M13 27c-3-3-2-8 3-11 6-4 15-3 18 2-6-2-12-1-15 2-3 2-4 4-4 6Z" fill="url(#swirlBlue)" />
        <path d="M36 14c8 7 5 16-4 21-8 5-17 8-31 5 11-1 18-4 24-9 6-5 11-9 11-17Z" fill="url(#swirlGreen)" />
        <path d="M24 23c3 1 6-1 8-4 1 7-5 14-13 14-4 0-7-2-7-4 4 1 10-1 12-6Z" fill="#5aa7dd" />
      </g>
    </Icon>
    <WatermarkText>
      极光下载站
      <WatermarkUrl>www.xz7.com</WatermarkUrl>
    </WatermarkText>
  </Watermark>
)

export default function App() {
  return (
    <>
      <GlobalStyle />
      <Window>
        <TitleArea />
        <MainToolbar />
        <Body>
          <LeftRail />
          <ComponentLibrary />
          <DesignStage />
          <PropertyPanel />
        </Body>
        <SiteMark />
      </Window>
    </>
  )
}
